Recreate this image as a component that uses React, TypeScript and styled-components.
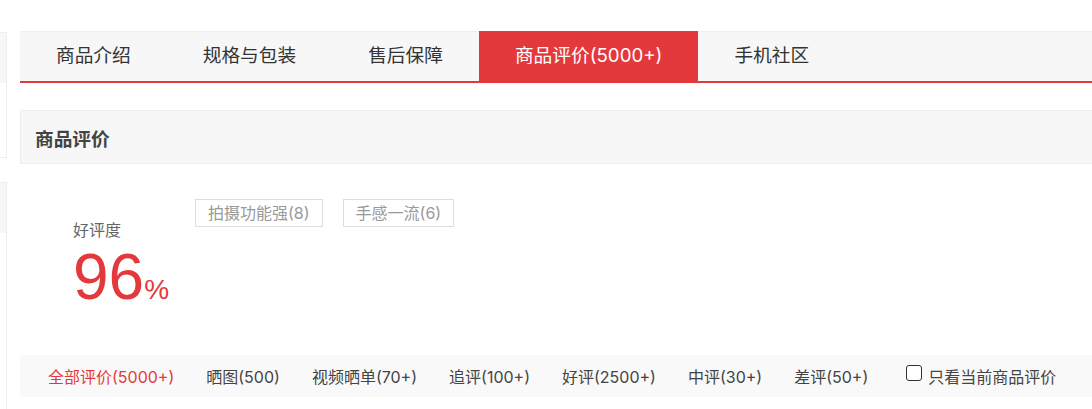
import React from "react";
import styled, { createGlobalStyle } from "styled-components";

const Global = createGlobalStyle`
  html, body { margin: 0; padding: 0; background: #fff; }
  body {
    font-family: "Inter", "Noto Sans CJK SC", sans-serif;
    color: #333;
    overflow: hidden;
  }
  * { box-sizing: border-box; }
`;

const Page = styled.div`
  display: flex;
  align-items: flex-start;
  width: 1092px;
  height: 409px;
  padding-top: 31px;
  overflow: hidden;
`;

const Sidebar = styled.aside`
  flex: 0 0 7px;
  display: flex;
  flex-direction: column;
  gap: 24px;
  padding-top: 1px;
`;

const SideBox = styled.div<{ $h?: number }>`
  height: ${(p) => (p.$h ? `${p.$h}px` : "260px")};
  border: 1px solid #eee;
  border-left: none;
`;

const SideHead = styled.div`
  height: 50px;
  background: #f7f7f7;
`;

const Main = styled.main`
  flex: 0 0 1100px;
  margin-left: 13px;
  display: flex;
  flex-direction: column;
`;

const TabBar = styled.nav`
  display: flex;
  height: 52px;
  background: #f7f7f7;
  border-top: 1px solid #eee;
  border-bottom: 2px solid #e4393c;
`;

const Tab = styled.div<{ $active?: boolean }>`
  padding: 0 36px;
  height: 50px;
  margin-top: -1px;
  line-height: 50px;
  font-size: 18.7px;
  color: ${(p) => (p.$active ? "#fff" : "#333")};
  background: ${(p) => (p.$active ? "#e4393c" : "transparent")};
  white-space: nowrap;
`;

const SectionHead = styled.div`
  margin-top: 27px;
  height: 54px;
  background: #f7f7f7;
  border: 1px solid #eee;
  padding-left: 14px;
  display: flex;
  align-items: center;
  font-size: 18.7px;
  font-weight: 700;
  color: #444;
`;

const RateArea = styled.section`
  height: 191px;
  display: flex;
  align-items: flex-start;
  padding: 35px 0 0 53px;
`;

const Percent = styled.div`
  flex: 0 0 122px;
  padding-top: 21px;
  display: flex;
  flex-direction: column;
`;

const PercentLabel = styled.div`
  font-size: 16px;
  line-height: 20px;
  color: #666;
`;

const PercentValue = styled.div`
  margin-top: 5px;
  font-family: "Liberation Sans", Arial, sans-serif;
  font-size: 64px;
  line-height: 1;
  color: #e4393c;
  white-space: nowrap;
`;

const PercentSign = styled.span`
  font-size: 28px;
`;

const Tags = styled.div`
  display: flex;
  gap: 20px;
`;

const Tag = styled.span`
  height: 28px;
  line-height: 26px;
  padding: 0 12px;
  border: 1px solid #ddd;
  font-size: 16px;
  color: #999;
  white-space: nowrap;
`;

const FilterBar = styled.div`
  height: 42px;
  background: #f9f9f9;
  display: flex;
  align-items: center;
  padding-left: 28px;
  gap: 32px;
`;

const FilterItem = styled.span<{ $active?: boolean }>`
  font-size: 16px;
  color: ${(p) => (p.$active ? "#e4393c" : "#444")};
  white-space: nowrap;
`;

const CheckLabel = styled.label`
  display: flex;
  align-items: center;
  gap: 6px;
  margin-left: 6px;
  font-size: 16px;
  color: #444;
  white-space: nowrap;
`;

const Check = styled.input`
  appearance: none;
  margin: 0;
  width: 16px;
  height: 16px;
  border: 1.5px solid #333;
  border-radius: 3px;
  background: #fff;
  position: relative;
  top: -3px;
`;

const tabs = ["商品介绍", "规格与包装", "售后保障", "商品评价(5000+)", "手机社区"];
const filters = [
  "全部评价(5000+)",
  "晒图(500)",
  "视频晒单(70+)",
  "追评(100+)",
  "好评(2500+)",
  "中评(30+)",
  "差评(50+)",
];

export default function App() {
  return (
    <>
      <Global />
      <Page>
        <Sidebar>
          <SideBox $h={126}>
            <SideHead />
          </SideBox>
          <SideBox>
            <SideHead />
          </SideBox>
        </Sidebar>
        <Main>
          <TabBar>
            {tabs.map((t, i) => (
              <Tab key={t} $active={i === 3}>
                {t}
              </Tab>
            ))}
          </TabBar>
          <SectionHead>商品评价</SectionHead>
          <RateArea>
            <Percent>
              <PercentLabel>好评度</PercentLabel>
              <PercentValue>
                96<PercentSign>%</PercentSign>
              </PercentValue>
            </Percent>
            <Tags>
              <Tag>拍摄功能强(8)</Tag>
              <Tag>手感一流(6)</Tag>
            </Tags>
          </RateArea>
          <FilterBar>
            {filters.map((f, i) => (
              <FilterItem key={f} $active={i === 0}>
                {f}
              </FilterItem>
            ))}
            <CheckLabel>
              <Check type="checkbox" />
              只看当前商品评价
            </CheckLabel>
          </FilterBar>
        </Main>
      </Page>
    </>
  );
}
